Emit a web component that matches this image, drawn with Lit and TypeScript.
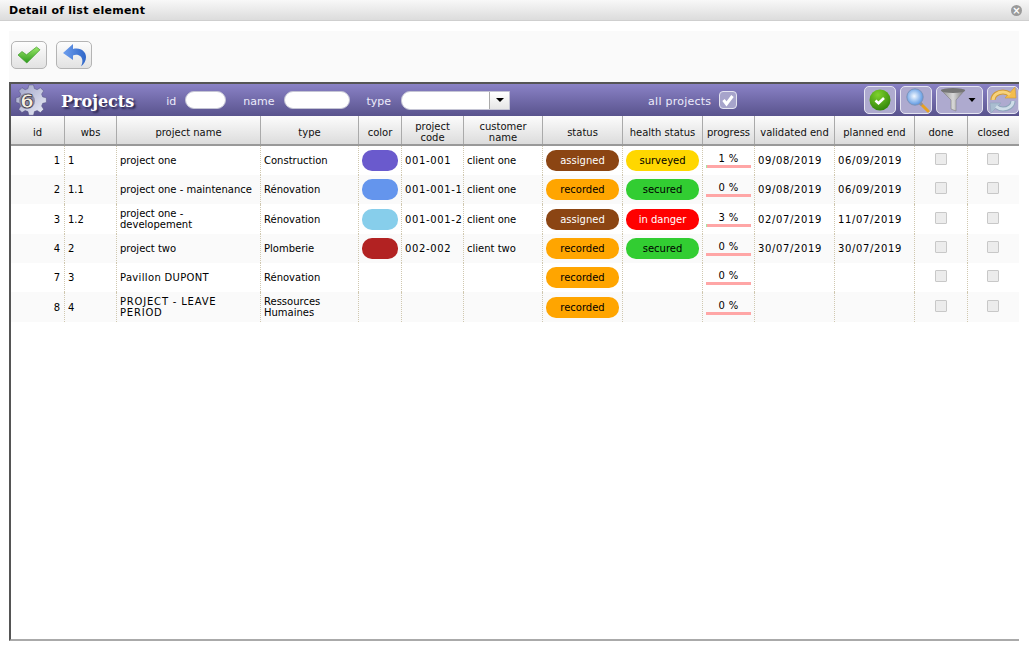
import { LitElement, css, html, svg } from 'lit';
import { customElement } from 'lit/decorators.js';

interface Project {
  id: number;
  wbs: string;
  name: string;
  tracking?: number;
  type: string;
  color?: string;
  code?: string;
  customer?: string;
  status: string;
  health?: string;
  progress: number;
  validated?: string;
  planned?: string;
}

const PROJECTS: Project[] = [
  { id: 1, wbs: '1', name: 'project one', type: 'Construction', color: '#6a5acd', code: '001-001', customer: 'client one', status: 'assigned', health: 'surveyed', progress: 1, validated: '09/08/2019', planned: '06/09/2019' },
  { id: 2, wbs: '1.1', name: 'project one - maintenance', type: 'Rénovation', color: '#6495ed', code: '001-001-1', customer: 'client one', status: 'recorded', health: 'secured', progress: 0, validated: '09/08/2019', planned: '06/09/2019' },
  { id: 3, wbs: '1.2', name: 'project one - developement', type: 'Rénovation', color: '#87ceeb', code: '001-001-2', customer: 'client one', status: 'assigned', health: 'in danger', progress: 3, validated: '02/07/2019', planned: '11/07/2019' },
  { id: 4, wbs: '2', name: 'project two', type: 'Plomberie', color: '#b22222', code: '002-002', customer: 'client two', status: 'recorded', health: 'secured', progress: 0, validated: '30/07/2019', planned: '30/07/2019' },
  { id: 7, wbs: '3', name: 'Pavillon DUPONT', tracking: 0.33, type: 'Rénovation', status: 'recorded', progress: 0 },
  { id: 8, wbs: '4', name: 'PROJECT - LEAVE\nPERIOD', tracking: 0.8, type: 'Ressources Humaines', status: 'recorded', progress: 0 },
];

const COLUMNS = ['id', 'wbs', 'project name', 'type', 'color', 'project code', 'customer name', 'status', 'health status', 'progress', 'validated end', 'planned end', 'done', 'closed'];

const ROW_HEIGHTS = [29, 29, 30, 29, 29, 30];

const gearIcon = svg`<svg class="gear" width="32" height="32" viewBox="0 0 32 32">
  <defs><linearGradient id="gg" x1="0" y1="0" x2="1" y2="1"><stop offset="0" stop-color="#9ea2c6"/><stop offset="1" stop-color="#eceef8"/></linearGradient></defs>
  <path fill="url(#gg)" stroke="#4c4a78" stroke-width=".5" d="M14 1h5l1 4 3 1.200 3.500-2.200 3.500 3.500-2.200 3.500 1.200 3 4 1v5l-4 1-1.200 3 2.200 3.500-3.500 3.500-3.500-2.200-3 1.200-1 4h-5l-1-4-3-1.200-3.500 2.200-3.500-3.500 2.200-3.500-1.200-3-4-1v-5l4-1 1.200-3-2.200-3.500 3.500-3.500 3.500 2.200 3-1.200z" transform="translate(1 0) scale(.92)"/>
  <circle cx="12" cy="17" r="8" fill="#8d8ca8"/>
  <text x="12" y="24" text-anchor="middle" font-family="'DejaVu Sans',sans-serif" font-weight="700" font-size="20" fill="#f6f0e0" stroke="#2a2838" stroke-width=".7">6</text>
</svg>`;

const checkIcon = svg`<svg width="24" height="18" viewBox="0 0 24 18">
  <defs><linearGradient id="ck" x1="0" y1="0" x2="0" y2="1"><stop offset="0" stop-color="#9be86a"/><stop offset="1" stop-color="#2c9a1c"/></linearGradient></defs>
  <path fill="url(#ck)" stroke="#3f9a2c" stroke-width=".7" stroke-linejoin="round" d="M1 9l4-3.500 4.500 3.300L19.500 1 23 3.800 9.800 17z"/>
</svg>`;

const undoIcon = svg`<svg width="25" height="25" viewBox="0 0 25 25">
  <defs><linearGradient id="ud" x1="0" y1="0" x2="1" y2="0"><stop offset="0" stop-color="#6f9fee"/><stop offset="1" stop-color="#2f66c8"/></linearGradient></defs>
  <path fill="url(#ud)" d="M1 10L11 1v5c8-2 13 3 13 8 0 4-2 7-5 9.500 2-4 2-8.500-1-10.500-2-1.500-5-1.500-7-.5V17z"/>
</svg>`;

const okIcon = svg`<svg width="26" height="26" viewBox="0 0 26 26">
  <defs><radialGradient id="ok" cx=".4" cy=".25" r=".85"><stop offset="0" stop-color="#7ed22c"/><stop offset="1" stop-color="#2a7d06"/></radialGradient></defs>
  <circle cx="13" cy="13" r="10.500" fill="url(#ok)"/>
  <path fill="none" stroke="#fff" stroke-width="2.600" d="M8.500 13.500l3 2.800 5.500-5.300"/>
</svg>`;

const searchIcon = svg`<svg width="30" height="28" viewBox="0 0 30 28">
  <defs><radialGradient id="lens" cx=".45" cy=".45" r=".6"><stop offset="0" stop-color="#f2f8ff"/><stop offset="1" stop-color="#4f8fe0"/></radialGradient></defs>
  <line x1="19" y1="17" x2="27" y2="25" stroke="#e8a020" stroke-width="3" stroke-linecap="round"/>
  <line x1="19" y1="17" x2="21" y2="19" stroke="#8b8fa0" stroke-width="3"/>
  <circle cx="14" cy="11" r="8.200" fill="url(#lens)" stroke="#7e93b8" stroke-width="1"/>
</svg>`;

const filterIcon = svg`<svg width="40" height="26" viewBox="0 0 40 26">
  <defs><linearGradient id="fn" x1="0" y1="0" x2="1" y2="0"><stop offset="0" stop-color="#8a8a8a"/><stop offset=".5" stop-color="#d8d8d8"/><stop offset="1" stop-color="#777"/></linearGradient></defs>
  <path fill="url(#fn)" stroke="#777" stroke-width=".5" d="M1 3h24l-9 10v11l-5-2v-9z"/>
  <ellipse cx="13" cy="3.500" rx="12" ry="2.500" fill="#757575"/>
  <path fill="#000" d="M28.500 11h7l-3.500 4z"/>
</svg>`;

const refreshIcon = svg`<svg width="30" height="28" viewBox="0 0 30 28">
  <path fill="none" stroke="#8fa6bc" stroke-width="5" d="M25 15c0 5-5 8-10 8-3 0-5-1-7-2.500"/>
  <path fill="#a9bdd0" stroke="#8fa6bc" stroke-width=".6" d="M13 17H2l1 10z"/>
  <path fill="none" stroke="#cfdde8" stroke-width="3" d="M25 15c0 5-5 8-10 8-3 0-5-1-7-2.500"/>
  <path fill="none" stroke="#d09a35" stroke-width="5" d="M5 14C5 9 10 6 15 6c3 0 5 1 7 2.500"/>
  <path fill="#f4bd4c" stroke="#d09a35" stroke-width=".6" d="M17 12h11L27 1z"/>
  <path fill="none" stroke="#f7d27c" stroke-width="3" d="M5 14C5 9 10 6 15 6c3 0 5 1 7 2.500"/>
</svg>`;

@customElement('app-root')
export class AppRoot extends LitElement {
  static override styles = css`
    :host {
      display: flex;
      flex-direction: column;
      height: 652px;
      background: #fff;
      font-family: 'DejaVu Sans', Verdana, sans-serif;
      font-size: 10px;
      color: #000;
      overflow: hidden;
    }

    .title-bar {
      flex: none;
      height: 20px;
      display: flex;
      align-items: center;
      justify-content: space-between;
      padding: 0 7px 0 9px;
      background: linear-gradient(#f8f8f8, #dcdcdc);
      border-bottom: 1px solid #cfcfcf;
      font-size: 11px;
      font-weight: 700;
      letter-spacing: 0.25px;
    }

    .close {
      width: 11px;
      height: 11px;
      border-radius: 50%;
      background: #9a9a9a;
      color: #fff;
      font-size: 10px;
      line-height: 11px;
      text-align: center;
    }

    .toolbar {
      flex: none;
      height: 51px;
      margin: 10px 10px 0 9px;
      padding: 10px 2px 0;
      box-sizing: border-box;
      display: flex;
      align-items: flex-start;
      gap: 9px;
      background: #fafafa;
    }

    .tool-btn {
      width: 36px;
      height: 28px;
      box-sizing: border-box;
      display: flex;
      align-items: center;
      justify-content: center;
      border: 1px solid #b4b4b4;
      border-radius: 5px;
      background: linear-gradient(#fdfdfd, #e2e2e2);
    }

    .panel {
      flex: 1;
      margin: 0 10px 11px 9px;
      border-top: 2px solid #555;
      border-left: 2px solid #555;
      border-bottom: 2px solid #aaa;
      overflow: hidden;
    }

    .panel-head {
      height: 32px;
      display: flex;
      align-items: center;
      background: linear-gradient(#8a82c6, #59538d);
      color: #ecebfa;
      font-size: 11px;
    }

    .gear {
      margin: 0 0 0 4px;
      flex: none;
    }

    .panel-title {
      margin: 2px 32px 0 14px;
      font-family: 'DejaVu Serif', 'Liberation Serif', serif;
      font-size: 16px;
      font-weight: 700;
      color: #fff;
      text-shadow: 2px 2px 2px #2c2850;
    }

    .filter-label {
      margin: 2px 9px 0 0;
    }

    .filter-label.type {
      margin-right: 10px;
    }

    .filter-label.all {
      margin-right: 8px;
      letter-spacing: 0.25px;
    }

    .field {
      height: 18px;
      box-sizing: border-box;
      border: 1px solid #c4c4d4;
      border-radius: 9px;
      background: #fff;
    }

    .field-id {
      width: 41px;
      margin-right: 17px;
    }

    .field-name {
      width: 66px;
      margin-right: 17px;
    }

    .field-type {
      width: 109px;
      height: 19px;
      margin-right: 138px;
      display: flex;
      justify-content: flex-end;
      border-radius: 9px 0 0 9px;
      overflow: hidden;
    }

    .select-arrow {
      width: 19px;
      display: flex;
      align-items: center;
      justify-content: center;
      background: linear-gradient(#fff, #e6e6e6);
      border-left: 1px solid #aaa;
    }

    .select-arrow::after {
      content: '';
      border: 4px solid transparent;
      border-top: 4px solid #000;
      margin-top: 4px;
    }

    .all-check {
      width: 18px;
      height: 18px;
      box-sizing: border-box;
      display: flex;
      align-items: center;
      justify-content: center;
      border: 1px solid #e4e4f0;
      border-radius: 4px;
      background: #a7a4cb;
    }

    .head-actions {
      margin-left: auto;
      display: flex;
      gap: 4px;
    }

    .head-btn {
      width: 32px;
      height: 28px;
      box-sizing: border-box;
      display: flex;
      align-items: center;
      justify-content: center;
      border: 1px solid #e6e6f2;
      border-radius: 5px;
      background: #aeaacf;
      overflow: hidden;
    }

    .head-btn.wide {
      width: 47px;
    }

    .row {
      display: grid;
      grid-template-columns: 54px 52px 144px 98px 43px 62px 79px 80px 80px 52px 80px 80px 53px 51px;
    }

    .columns {
      height: 30px;
      box-sizing: border-box;
      background: linear-gradient(#fcfcfc, #dcdcdc);
      border-bottom: 2px solid #999;
    }

    .column {
      box-sizing: border-box;
      padding-top: 4px;
      display: flex;
      align-items: center;
      justify-content: center;
      text-align: center;
      line-height: 11px;
      border-right: 1px solid #aaa;
      color: #111;
    }

    .column:last-child,
    .cell:last-child {
      border-right: none;
    }

    .row-item:nth-child(even) {
      background: #fafafa;
    }

    .cell {
      box-sizing: border-box;
      display: flex;
      align-items: center;
      padding: 0 3px;
      line-height: 11px;
      border-right: 1px dotted #d0c8b0;
      white-space: pre-line;
    }

    .cell.num {
      justify-content: flex-end;
      padding-right: 4px;
    }

    .cell.digits {
      white-space: nowrap;
      overflow: hidden;
      letter-spacing: 0.65px;
      padding-right: 0;
    }

    .cell.center {
      justify-content: center;
    }

    .cell.center:last-child {
      padding-right: 5px;
    }

    .swatch {
      width: 36px;
      height: 21px;
      border-radius: 10px;
    }

    .pill {
      width: 73px;
      height: 21px;
      display: flex;
      align-items: center;
      justify-content: center;
      border-radius: 10px;
    }

    .assigned {
      background: #8b4513;
      color: #fff;
    }

    .recorded {
      background: #ffa500;
    }

    .surveyed {
      background: #ffd700;
    }

    .secured {
      background: #32cd32;
    }

    .danger {
      background: #f00;
      color: #fff;
    }

    .progress {
      width: 45px;
      margin: 0 auto;
      text-align: center;
      letter-spacing: 0.3px;
      white-space: normal;
    }

    .bar {
      height: 3px;
      margin-top: 1px;
      background: #ffa6a6;
    }

    .bar-fill {
      height: 100%;
      background: #a6e8a0;
    }

    .box {
      width: 12px;
      height: 12px;
      box-sizing: border-box;
      margin-bottom: 3px;
      border: 1px solid #c8c8c8;
      background: #ececec;
      border-radius: 1px;
    }
  `;

  private healthClass(health: string) {
    return health === 'in danger' ? 'danger' : health;
  }

  private renderRow(p: Project, i: number) {
    return html`
      <div class="row row-item" style="height:${ROW_HEIGHTS[i]}px">
        <div class="cell num">${p.id}</div>
        <div class="cell">${p.wbs}</div>
        <div class="cell" style="letter-spacing:${p.tracking ?? 0}px">${p.name}</div>
        <div class="cell">${p.type}</div>
        <div class="cell">${p.color ? html`<div class="swatch" style="background:${p.color}"></div>` : ''}</div>
        <div class="cell digits">${p.code ?? ''}</div>
        <div class="cell">${p.customer ?? ''}</div>
        <div class="cell"><div class="pill ${p.status}">${p.status}</div></div>
        <div class="cell">${p.health ? html`<div class="pill ${this.healthClass(p.health)}">${p.health}</div>` : ''}</div>
        <div class="cell">
          <div class="progress">
            ${p.progress} %
            <div class="bar"><div class="bar-fill" style="width:${p.progress}%"></div></div>
          </div>
        </div>
        <div class="cell digits">${p.validated ?? ''}</div>
        <div class="cell digits">${p.planned ?? ''}</div>
        <div class="cell center"><div class="box"></div></div>
        <div class="cell center"><div class="box"></div></div>
      </div>
    `;
  }

  override render() {
    return html`
      <div class="title-bar">
        <span>Detail of list element</span>
        <span class="close">×</span>
      </div>
      <div class="toolbar">
        <div class="tool-btn">${checkIcon}</div>
        <div class="tool-btn">${undoIcon}</div>
      </div>
      <div class="panel">
        <div class="panel-head">
          ${gearIcon}
          <span class="panel-title">Projects</span>
          <span class="filter-label">id</span>
          <div class="field field-id"></div>
          <span class="filter-label">name</span>
          <div class="field field-name"></div>
          <span class="filter-label type">type</span>
          <div class="field field-type"><div class="select-arrow"></div></div>
          <span class="filter-label all">all projects</span>
          <div class="all-check">
            <svg width="14" height="14" viewBox="0 0 14 14"><path fill="none" stroke="#fff" stroke-width="3" d="M2.500 7l3 4 6-8"/></svg>
          </div>
          <div class="head-actions">
            <div class="head-btn">${okIcon}</div>
            <div class="head-btn">${searchIcon}</div>
            <div class="head-btn wide">${filterIcon}</div>
            <div class="head-btn">${refreshIcon}</div>
          </div>
        </div>
        <div class="row columns">
          ${COLUMNS.map((c) => html`<div class="column">${c}</div>`)}
        </div>
        <div>${PROJECTS.map((p, i) => this.renderRow(p, i))}</div>
      </div>
    `;
  }
}

declare global {
  interface HTMLElementTagNameMap {
    'app-root': AppRoot;
  }
}
